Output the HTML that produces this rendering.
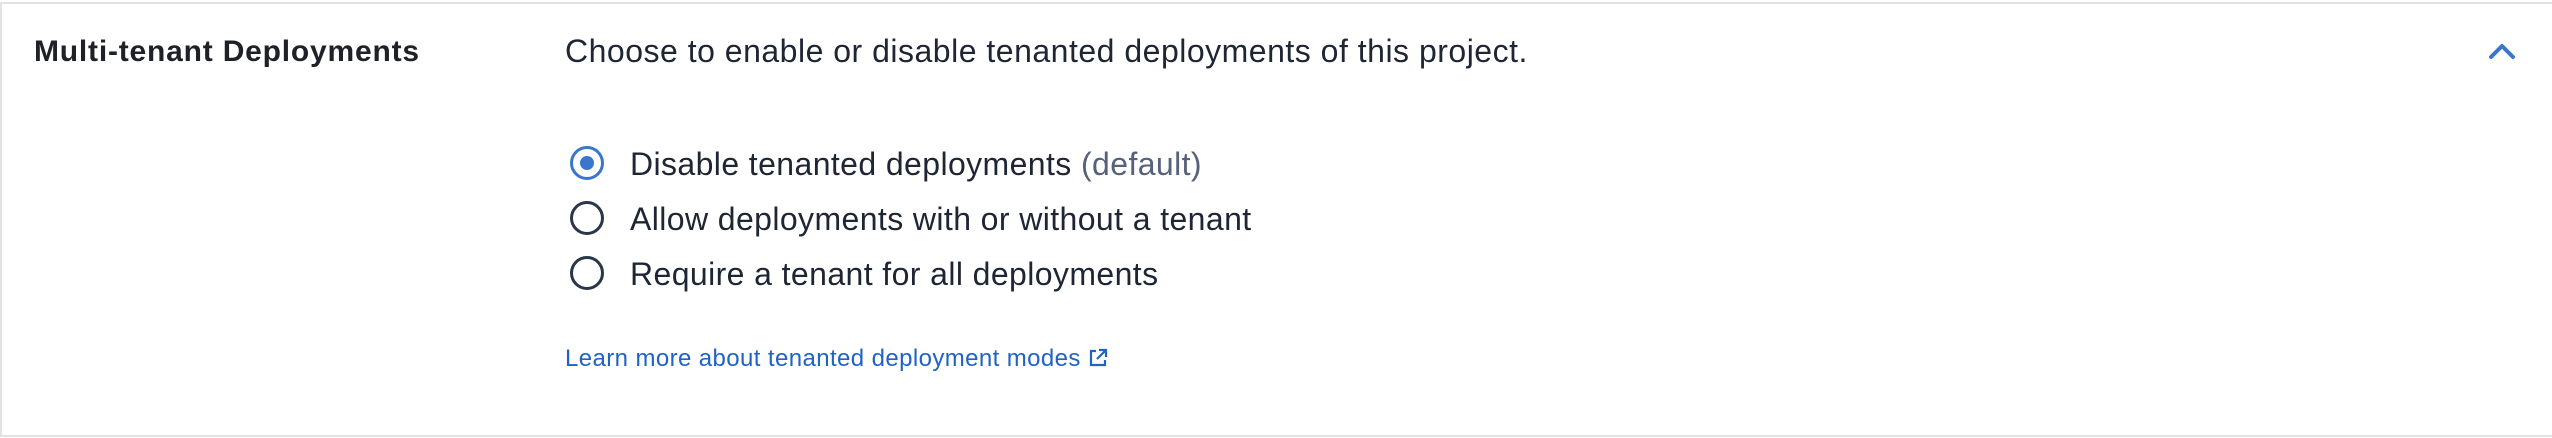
<!DOCTYPE html>
<html><head><meta charset="utf-8"><style>
html,body{margin:0;padding:0;background:#fff;}
body{width:2552px;height:438px;position:relative;overflow:hidden;font-family:"Liberation Sans",Arial,sans-serif;color:#1e2533;}
.card{position:absolute;left:0;top:2px;width:2550px;height:431px;border:2px solid #e2e2e2;border-right:none;background:#fff;}
.title{position:absolute;left:34px;top:35px;font-size:30px;letter-spacing:0.8px;font-weight:bold;color:#1e2128;}
.desc{position:absolute;left:565px;top:33px;font-size:32px;letter-spacing:0.5px;color:#1e2533;}
.r{position:absolute;left:570px;width:34px;height:34px;border:3px solid #2b3648;border-radius:50%;box-sizing:border-box;}
.r.sel{border-color:#3a76cc;}
.r.sel::after{content:"";position:absolute;left:7px;top:7px;width:14px;height:14px;border-radius:50%;background:#3a76cc;}
.lab{position:absolute;left:630px;font-size:32px;letter-spacing:0.4px;color:#1e2533;}
.lab span{color:#56617a;}
.link{position:absolute;left:565px;top:345px;font-size:24px;letter-spacing:0.4px;color:#1f63c4;}
</style></head><body>
<div class="card"></div>
<div class="title">Multi-tenant Deployments</div>
<div class="desc">Choose to enable or disable tenanted deployments of this project.</div>
<svg style="position:absolute;left:2488px;top:42px" width="28" height="18" viewBox="0 0 28 18"><path d="M3 15 L14 4 L25 15" fill="none" stroke="#3a76cc" stroke-width="4" stroke-linecap="round" stroke-linejoin="round"/></svg>
<div class="r sel" style="top:146px"></div>
<div class="lab" style="top:146px">Disable tenanted deployments <span>(default)</span></div>
<div class="r" style="top:201px"></div>
<div class="lab" style="top:201px">Allow deployments with or without a tenant</div>
<div class="r" style="top:256px"></div>
<div class="lab" style="top:256px">Require a tenant for all deployments</div>
<div class="link">Learn more about tenanted deployment modes <svg width="20" height="20" viewBox="0 0 20 20" style="vertical-align:-2px"><path d="M8 3H3v14h14v-5M11 2h7v7M18 2L9 11" fill="none" stroke="#1f63c4" stroke-width="2.2"/></svg></div>
</body></html>
